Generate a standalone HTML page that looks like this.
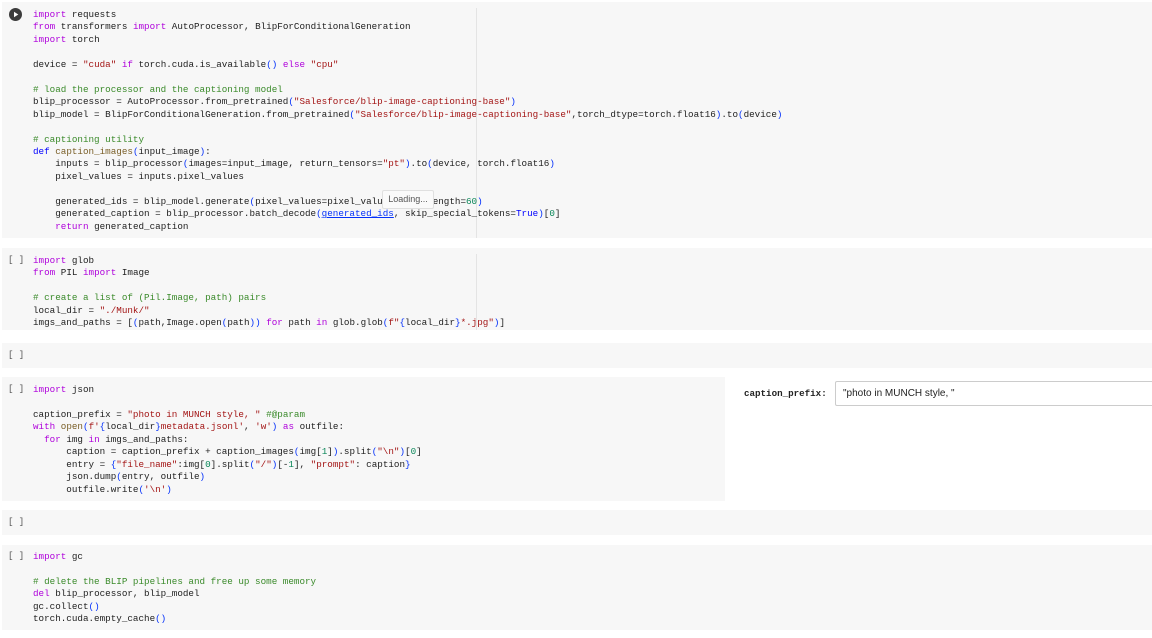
<!DOCTYPE html><html><head><style>
body{margin:0;background:#fff;width:1152px;height:638px;overflow:hidden;position:relative;font-family:"Liberation Mono",monospace;}
.c{position:absolute;left:2px;right:0;background:#f7f7f7;}
pre{position:absolute;left:33px;margin:0;font-family:"Liberation Mono",monospace;font-size:9.25px;line-height:12.45px;color:#212121;}
.k{color:#af00db}.s{color:#a31515}.m{color:#3a8a2a}.b{color:#0431fa}.d{color:#0000ff}.f{color:#795e26}.n{color:#098658}
.br{position:absolute;left:8px;font-size:9px;color:#555;}
.rule{position:absolute;left:476px;width:1px;background:#e4e4e4;}
</style></head><body>
<div class="c" style="top:2px;height:236px"></div>
<div class="rule" style="top:8px;height:230px"></div>
<svg style="position:absolute;left:9px;top:8px" width="13" height="13"><circle cx="6.5" cy="6.5" r="6.5" fill="#3c3c3c"/><path d="M5 3.8L9.3 6.5L5 9.2Z" fill="#fff"/></svg>
<pre style="top:9px"><span class="k">import</span> requests
<span class="k">from</span> transformers <span class="k">import</span> AutoProcessor, BlipForConditionalGeneration
<span class="k">import</span> torch

device = <span class="s">"cuda"</span> <span class="k">if</span> torch.cuda.is_available<span class="b">()</span> <span class="k">else</span> <span class="s">"cpu"</span>

<span class="m"># load the processor and the captioning model</span>
blip_processor = AutoProcessor.from_pretrained<span class="b">(</span><span class="s">"Salesforce/blip-image-captioning-base"</span><span class="b">)</span>
blip_model = BlipForConditionalGeneration.from_pretrained<span class="b">(</span><span class="s">"Salesforce/blip-image-captioning-base"</span>,torch_dtype=torch.float16<span class="b">)</span>.to<span class="b">(</span>device<span class="b">)</span>

<span class="m"># captioning utility</span>
<span class="d">def</span> <span class="f">caption_images</span><span class="b">(</span>input_image<span class="b">)</span>:
    inputs = blip_processor<span class="b">(</span>images=input_image, return_tensors=<span class="s">"pt"</span><span class="b">)</span>.to<span class="b">(</span>device, torch.float16<span class="b">)</span>
    pixel_values = inputs.pixel_values

    generated_ids = blip_model.generate<span class="b">(</span>pixel_values=pixel_values, max_length=<span class="n">60</span><span class="b">)</span>
    generated_caption = blip_processor.batch_decode<span class="b">(</span><span style="color:#0431fa;text-decoration:underline">generated_ids</span>, skip_special_tokens=<span class="d">True</span><span class="b">)</span>[<span class="n">0</span>]
    <span class="k">return</span> generated_caption</pre>
<div style="position:absolute;left:382px;top:190px;width:50px;height:17px;background:#fafafa;border:1px solid #e0e0e0;border-radius:2px;font-family:'Liberation Sans',sans-serif;font-size:9px;color:#555;line-height:17px;text-align:center">Loading...</div>

<div class="c" style="top:248px;height:82px"></div>
<div class="rule" style="top:254px;height:76px"></div>
<div class="br" style="top:255px">[ ]</div>
<pre style="top:255px"><span class="k">import</span> glob
<span class="k">from</span> PIL <span class="k">import</span> Image

<span class="m"># create a list of (Pil.Image, path) pairs</span>
local_dir = <span class="s">"./Munk/"</span>
imgs_and_paths = [<span class="b">(</span>path,Image.open<span class="b">(</span>path<span class="b">))</span> <span class="k">for</span> path <span class="k">in</span> glob.glob<span class="b">(</span><span class="s">f"</span><span class="b">{</span>local_dir<span class="b">}</span><span class="s">*.jpg"</span><span class="b">)</span>]</pre>

<div class="c" style="top:343px;height:25px"></div>
<div class="br" style="top:350px">[ ]</div>

<div class="c" style="top:377px;height:124px;right:427px"></div>
<div class="br" style="top:384px">[ ]</div>
<pre style="top:384px"><span class="k">import</span> json

caption_prefix = <span class="s">"photo in MUNCH style, "</span> <span class="m">#@param</span>
<span class="k">with</span> <span class="f">open</span><span class="b">(</span><span class="s">f'</span><span class="b">{</span>local_dir<span class="b">}</span><span class="s">metadata.jsonl'</span>, <span class="s">'w'</span><span class="b">)</span> <span class="k">as</span> outfile:
  <span class="k">for</span> img <span class="k">in</span> imgs_and_paths:
      caption = caption_prefix + caption_images<span class="b">(</span>img[<span class="n">1</span>]<span class="b">)</span>.split<span class="b">(</span><span class="s">"\n"</span><span class="b">)</span>[<span class="n">0</span>]
      entry = <span class="b">{</span><span class="s">"file_name"</span>:img[<span class="n">0</span>].split<span class="b">(</span><span class="s">"/"</span><span class="b">)</span>[-<span class="n">1</span>], <span class="s">"prompt"</span>: caption<span class="b">}</span>
      json.dump<span class="b">(</span>entry, outfile<span class="b">)</span>
      outfile.write<span class="b">(</span><span class="s">'\n'</span><span class="b">)</span></pre>
<div style="position:absolute;left:744px;top:388px;font-size:9.2px;font-weight:bold;color:#222">caption_prefix:</div>
<div style="position:absolute;left:835px;top:381px;width:330px;height:23px;border:1px solid #ccc;border-radius:2px;font-family:'Liberation Sans',sans-serif;font-size:10px;line-height:23px;padding-left:7px;color:#222">"photo in MUNCH style, "</div>

<div class="c" style="top:510px;height:25px"></div>
<div class="br" style="top:517px">[ ]</div>

<div class="c" style="top:545px;height:85px"></div>
<div class="br" style="top:551px">[ ]</div>
<pre style="top:551px"><span class="k">import</span> gc

<span class="m"># delete the BLIP pipelines and free up some memory</span>
<span class="k">del</span> blip_processor, blip_model
gc.collect<span class="b">()</span>
torch.cuda.empty_cache<span class="b">()</span></pre>
</body></html>
